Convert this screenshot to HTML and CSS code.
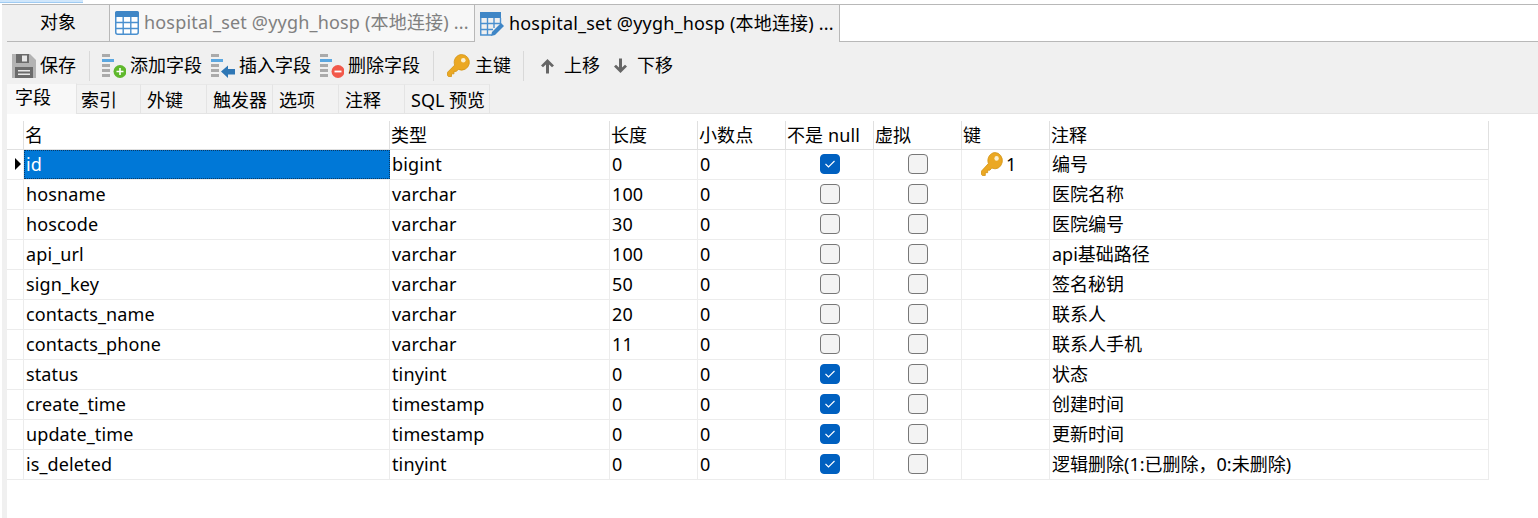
FILE: index.html
```html
<!DOCTYPE html>
<html lang="zh-CN">
<head>
<meta charset="utf-8">
<title>hospital_set</title>
<link rel="stylesheet" href="styles.css">
</head>
<body>
<svg class="defs" width="0" height="0" aria-hidden="true">
  <defs>
    <g id="key">
      <path d="M14.500 0.500a7.800 7.800 0 1 1-3.200 14.900L9.300 17.400H7v2.400H4.500v2.700H1.400L0.500 21.500v-3.200l7.200-7.200a7.800 7.800 0 0 1 6.800-10.600z" fill="#eba823" stroke="#d39414" stroke-width=".8"/>
      <circle cx="16.300" cy="6.200" r="2.300" fill="#fbf0cf"/>
    </g>
    <g id="lines">
      <rect x="0" y="0" width="8" height="3" fill="#aaa"/>
      <rect x="0" y="5" width="12" height="3" fill="#5ba7e0"/>
      <rect x="0" y="10" width="8" height="3" fill="#aaa"/>
      <rect x="0" y="15" width="8" height="3" fill="#aaa"/>
      <rect x="0" y="20" width="8" height="3" fill="#aaa"/>
    </g>
  </defs>
</svg>
<div class="titlebar"><div class="titlebar-accent"></div></div>
<div class="app">
  <div class="rail"></div>
  <main class="main">
    <nav class="doc-tabs">
      <div class="doc-tab objects">对象</div>
      <div class="doc-tab inactive">
        <svg class="tab-icon" width="24" height="24" viewBox="0 0 24 24"><rect x=".75" y=".75" width="22.5" height="22.5" rx="2" fill="#fff" stroke="#4a90cf" stroke-width="1.5"/><path d="M2 0h20a2 2 0 0 1 2 2v4H0V2a2 2 0 0 1 2-2z" fill="#3f86c6"/><path d="M8.200 6v17M15.800 6v17M1 11.500h22M1 17.500h22" stroke="#4a90cf" stroke-width="1.400"/></svg>
        <span class="tab-label">hospital_set @yygh_hosp (本地连接) ...</span>
      </div>
      <div class="doc-tab active">
        <svg class="tab-icon" width="24" height="24" viewBox="0 0 24 24"><path d="M0 0h21v6H0z" fill="#3f86c6"/><path d="M.75 6v17h11M20.500 6v6M7.500 6v17M14 6v10M1 11.500h19M1 17.500h12" fill="none" stroke="#4a90cf" stroke-width="1.400"/><path d="M12 20l9-9 3 3-9 9-4 1z" fill="#3f86c6"/></svg>
        <span class="tab-label">hospital_set @yygh_hosp (本地连接) ...</span>
      </div>
      <div class="doc-rest"></div>
    </nav>
    <div class="toolbar">
      <button class="tool save">
        <svg width="24" height="24" viewBox="0 0 24 24"><path d="M0 0h18l6 6v18H0z" fill="#b3b3b3"/><path d="M4 0h13v9H4z" fill="#6b6b6b"/><path d="M10 1.500h5v6h-5z" fill="#e8e8e8"/><path d="M3 13h18v11H3z" fill="#6b6b6b"/><path d="M6 16h12v1.600H6zM6 19.500h12v1.600H6z" fill="#e8e8e8"/></svg>
        <span>保存</span>
      </button>
      <i class="sep"></i>
      <button class="tool add">
        <svg width="24" height="24" viewBox="0 0 24 24"><use href="#lines"/><circle cx="18" cy="17.500" r="6.500" fill="#5fb82c"/><path d="M14.500 17.500h7M18 14v7" stroke="#fff" stroke-width="1.600"/></svg>
        <span>添加字段</span>
      </button>
      <button class="tool insert">
        <svg width="24" height="24" viewBox="0 0 24 24"><use href="#lines"/><path d="M10 17.500l7-6v3.500h7v5.500h-7v3.500z" fill="#2f77b5"/></svg>
        <span>插入字段</span>
      </button>
      <button class="tool remove">
        <svg width="24" height="24" viewBox="0 0 24 24"><use href="#lines"/><circle cx="18" cy="17.500" r="6.500" fill="#f2594b"/><path d="M14.500 17.500h7" stroke="#fff" stroke-width="1.800"/></svg>
        <span>删除字段</span>
      </button>
      <i class="sep sep-b"></i>
      <button class="tool primary">
        <svg width="23" height="23" viewBox="0 0 23 23"><use href="#key"/></svg>
        <span>主键</span>
      </button>
      <i class="sep sep-c"></i>
      <button class="tool up">
        <svg width="15" height="16" viewBox="0 0 15 16"><path d="M7.500 1L14 7.500 12 9.300 9 6.400V15.500H6V6.400L3 9.300 1 7.500z" fill="#666"/></svg>
        <span>上移</span>
      </button>
      <button class="tool down">
        <svg width="15" height="16" viewBox="0 0 15 16"><path d="M7.500 15L1 8.500 3 6.700 6 9.600V.5h3v9.100l3-2.900 2 1.800z" fill="#666"/></svg>
        <span>下移</span>
      </button>
    </div>
    <div class="sub-tabs">
      <div class="sub-tab current">字段</div>
      <div class="sub-tab second">索引</div>
      <div class="sub-tab">外键</div>
      <div class="sub-tab">触发器</div>
      <div class="sub-tab">选项</div>
      <div class="sub-tab">注释</div>
      <div class="sub-tab wide">SQL 预览</div>
    </div>
    <section class="grid-area">
      <div class="row head">
        <div class="cell"></div><div class="cell">名</div><div class="cell">类型</div><div class="cell">长度</div><div class="cell">小数点</div><div class="cell">不是 null</div><div class="cell">虚拟</div><div class="cell">键</div><div class="cell last">注释</div>
      </div>
      <div class="row">
        <div class="cell ind"><span class="arrow"></span></div><div class="cell selected">id</div><div class="cell">bigint</div><div class="cell">0</div><div class="cell">0</div>
        <div class="cell mid"><span class="check on"><svg width="12" height="10" viewBox="0 0 12 10"><path d="M1.500 5l3 3 6-6" fill="none" stroke="#fff" stroke-width="1.100"/></svg></span></div><div class="cell mid"><span class="check"></span></div>
        <div class="cell keycell"><svg width="22" height="24" viewBox="0 0 23 23" preserveAspectRatio="none"><use href="#key"/></svg><span>1</span></div><div class="cell last">编号</div>
      </div>
      <div class="row">
        <div class="cell"></div><div class="cell">hosname</div><div class="cell">varchar</div><div class="cell">100</div><div class="cell">0</div>
        <div class="cell mid"><span class="check"></span></div><div class="cell mid"><span class="check"></span></div><div class="cell"></div><div class="cell last">医院名称</div>
      </div>
      <div class="row">
        <div class="cell"></div><div class="cell">hoscode</div><div class="cell">varchar</div><div class="cell">30</div><div class="cell">0</div>
        <div class="cell mid"><span class="check"></span></div><div class="cell mid"><span class="check"></span></div><div class="cell"></div><div class="cell last">医院编号</div>
      </div>
      <div class="row">
        <div class="cell"></div><div class="cell">api_url</div><div class="cell">varchar</div><div class="cell">100</div><div class="cell">0</div>
        <div class="cell mid"><span class="check"></span></div><div class="cell mid"><span class="check"></span></div><div class="cell"></div><div class="cell last">api基础路径</div>
      </div>
      <div class="row">
        <div class="cell"></div><div class="cell">sign_key</div><div class="cell">varchar</div><div class="cell">50</div><div class="cell">0</div>
        <div class="cell mid"><span class="check"></span></div><div class="cell mid"><span class="check"></span></div><div class="cell"></div><div class="cell last">签名秘钥</div>
      </div>
      <div class="row">
        <div class="cell"></div><div class="cell">contacts_name</div><div class="cell">varchar</div><div class="cell">20</div><div class="cell">0</div>
        <div class="cell mid"><span class="check"></span></div><div class="cell mid"><span class="check"></span></div><div class="cell"></div><div class="cell last">联系人</div>
      </div>
      <div class="row">
        <div class="cell"></div><div class="cell">contacts_phone</div><div class="cell">varchar</div><div class="cell">11</div><div class="cell">0</div>
        <div class="cell mid"><span class="check"></span></div><div class="cell mid"><span class="check"></span></div><div class="cell"></div><div class="cell last">联系人手机</div>
      </div>
      <div class="row">
        <div class="cell"></div><div class="cell">status</div><div class="cell">tinyint</div><div class="cell">0</div><div class="cell">0</div>
        <div class="cell mid"><span class="check on"><svg width="12" height="10" viewBox="0 0 12 10"><path d="M1.500 5l3 3 6-6" fill="none" stroke="#fff" stroke-width="1.100"/></svg></span></div><div class="cell mid"><span class="check"></span></div><div class="cell"></div><div class="cell last">状态</div>
      </div>
      <div class="row">
        <div class="cell"></div><div class="cell">create_time</div><div class="cell">timestamp</div><div class="cell">0</div><div class="cell">0</div>
        <div class="cell mid"><span class="check on"><svg width="12" height="10" viewBox="0 0 12 10"><path d="M1.500 5l3 3 6-6" fill="none" stroke="#fff" stroke-width="1.100"/></svg></span></div><div class="cell mid"><span class="check"></span></div><div class="cell"></div><div class="cell last">创建时间</div>
      </div>
      <div class="row">
        <div class="cell"></div><div class="cell">update_time</div><div class="cell">timestamp</div><div class="cell">0</div><div class="cell">0</div>
        <div class="cell mid"><span class="check on"><svg width="12" height="10" viewBox="0 0 12 10"><path d="M1.500 5l3 3 6-6" fill="none" stroke="#fff" stroke-width="1.100"/></svg></span></div><div class="cell mid"><span class="check"></span></div><div class="cell"></div><div class="cell last">更新时间</div>
      </div>
      <div class="row">
        <div class="cell"></div><div class="cell">is_deleted</div><div class="cell">tinyint</div><div class="cell">0</div><div class="cell">0</div>
        <div class="cell mid"><span class="check on"><svg width="12" height="10" viewBox="0 0 12 10"><path d="M1.500 5l3 3 6-6" fill="none" stroke="#fff" stroke-width="1.100"/></svg></span></div><div class="cell mid"><span class="check"></span></div><div class="cell"></div><div class="cell last">逻辑删除(1:已删除，0:未删除)</div>
      </div>
    </section>
  </main>
</div>
</body>
</html>
```
FILE: styles.css
```css
* { box-sizing: border-box; }
html, body { margin: 0; height: 100%; }
body {
  background: #fff;
  color: #000;
  font: 18px/24px "Noto Sans", "Noto Sans CJK SC", sans-serif;
  overflow: hidden;
}
.defs { display: block; height: 0; }
.titlebar { height: 4px; }
.titlebar-accent { width: 83px; height: 3px; background: #cfe6fb; border-bottom: 1px solid #9fcbf2; }
.app { display: flex; height: 514px; padding-left: 2px; }
.rail { width: 5px; background: #f0f0f0; flex: none; border-top: 1px solid #b8b8b8; }
.main { flex: 1; min-width: 0; display: flex; flex-direction: column; }

.doc-tabs { display: flex; height: 38px; border-top: 1px solid #b8b8b8; flex: none; }
.doc-tab {
  display: flex; align-items: center; height: 37px;
  white-space: nowrap; border-right: 1px solid #b8b8b8; border-bottom: 1px solid #b8b8b8;
}
.doc-tab.objects { width: 103px; justify-content: center; background: #f0f0f0; padding-bottom: 2px; }
.doc-tab.inactive { width: 365px; padding-left: 5px; background: #f7f7f7; color: #808080; }
.doc-tab.active { width: 365px; padding-left: 5px; background: #f0f0f0; border-bottom: 0; }
.tab-icon { margin-right: 5px; flex: none; }
.tab-label { letter-spacing: .18px; margin-bottom: 2px; }
.doc-rest { flex: 1; height: 37px; border-bottom: 1px solid #b8b8b8; }

.toolbar {
  display: flex; align-items: center; height: 41px; flex: none;
  background: #f0f0f0; padding-left: 5px; padding-top: 6px;
}
.tool {
  display: flex; align-items: center; gap: 4px; padding: 0; border: 0; background: none;
  font: inherit; color: inherit;
}
.tool span { margin-bottom: 2px; }
.sep { display: block; width: 1px; height: 30px; background: #d9d9d9; margin: 0 12px 0 13px; }
.insert { margin-left: 9px; }
.remove { margin-left: 9px; }
.primary { gap: 5px; }
.sep-b { margin: 0 13px; }
.sep-c { margin: 0 16px 0 12px; }
.up { gap: 9px; }
.down { gap: 9px; margin-left: 13px; }

.sub-tabs {
  display: flex; align-items: flex-end; height: 31px; flex: none; background: #f0f0f0;
  border-bottom: 1px solid #e4e4e4;
}
.sub-tab {
  width: 66px; height: 29px; padding-left: 6px; line-height: 30px;
  background: #f2f2f2; border-right: 1px solid #e4e4e4; border-top: 1px solid #e8e8e8;
}
.sub-tab.current { width: 70px; height: 31px; padding-left: 8px; background: #f8f8f8; line-height: 26px; border-top: 1px solid #f0f0f0; margin-bottom: -1px; }
.sub-tab.second { width: 64px; padding-left: 4px; }
.sub-tab.wide { width: 85px; }

.grid-area { flex: 1; background: #fff; padding-top: 7px; }
.row {
  display: grid;
  grid-template-columns: 17px 366px 220px 88px 88px 88px 88px 88px 439px;
  width: 1482px; height: 30px;
  border-bottom: 1px solid #ececec;
}
.row.head { height: 29px; border-bottom-color: #e0e0e0; }
.cell {
  display: flex; align-items: center; padding: 0 0 1px 2px; white-space: nowrap;
  border-right: 1px solid #ececec; min-width: 0; letter-spacing: .12px;
}
.cell.last { letter-spacing: 0; }
.head .cell { border-right-color: #e0e0e0; padding-left: 1px; }
.ind { justify-content: flex-end; padding: 0 2px 1px 0; }
.arrow { width: 0; height: 0; border-left: 6px solid #000; border-top: 6px solid transparent; border-bottom: 6px solid transparent; }
.selected { background: #0078d7; color: #fff; border: 1px dotted #0a3a66; padding-left: 1px; }
.cell.mid { justify-content: center; padding-left: 0; }
.check {
  display: flex; align-items: center; justify-content: center;
  width: 20px; height: 20px; border: 1.5px solid #777; border-radius: 4px; background: #f3f3f3;
}
.check.on { background: #0060c0; border-color: #0060c0; }
.keycell { padding-left: 19px; gap: 3px; }
```
